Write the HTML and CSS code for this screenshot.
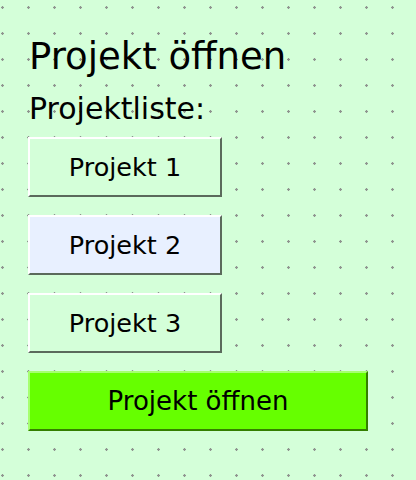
FILE: index.html
```html
<!DOCTYPE html>
<html lang="de">
<head>
<meta charset="utf-8">
<title>Projekt öffnen</title>
<link rel="stylesheet" href="styles.css">
</head>
<body>
<main class="panel">
  <h1 class="title">Projekt öffnen</h1>
  <p class="subtitle">Projektliste:</p>
  <div class="list">
    <button class="btn">Projekt 1</button>
    <button class="btn btn-selected">Projekt 2</button>
    <button class="btn">Projekt 3</button>
  </div>
  <button class="btn btn-open">Projekt öffnen</button>
</main>
</body>
</html>
```
FILE: styles.css
```css
html, body {
  margin: 0;
  padding: 0;
}
body {
  width: 416px;
  height: 480px;
  overflow: hidden;
  background-color: #d4ffd9;
  background-image: radial-gradient(circle at 2.5px 7.5px, #8f948f 0, #8f948f 1px, rgba(143,148,143,0) 1.5px);
  background-size: 26px 26px;
  font-family: "DejaVu Sans", sans-serif;
  color: #000;
}
.panel {
  display: flex;
  flex-direction: column;
  align-items: flex-start;
  padding: 35px 0 0 28px;
}
.title {
  margin: 0;
  font-size: 37px;
  font-weight: normal;
  line-height: 44px;
  padding-left: 1px;
}
.subtitle {
  margin: 12px 0 0;
  font-size: 30px;
  line-height: 36px;
  padding-left: 1px;
}
.list {
  display: flex;
  flex-direction: column;
  gap: 18px;
  margin-top: 10px;
}
.btn {
  box-sizing: border-box;
  width: 194px;
  height: 60px;
  margin: 0;
  padding: 0;
  font-family: inherit;
  font-size: 25.5px;
  color: #000;
  background: #d4ffd9;
  border-style: solid;
  border-width: 2px;
  border-color: #ffffff #5b6a5c #5b6a5c #ffffff;
  border-radius: 0;
  text-align: center;
}
.btn-selected {
  background: #e8f0ff;
}
.btn-open {
  width: 340px;
  margin-top: 18px;
  font-size: 26px;
  background: #66ff00;
  border-color: #a6ff70 #347f00 #347f00 #a6ff70;
}
```
